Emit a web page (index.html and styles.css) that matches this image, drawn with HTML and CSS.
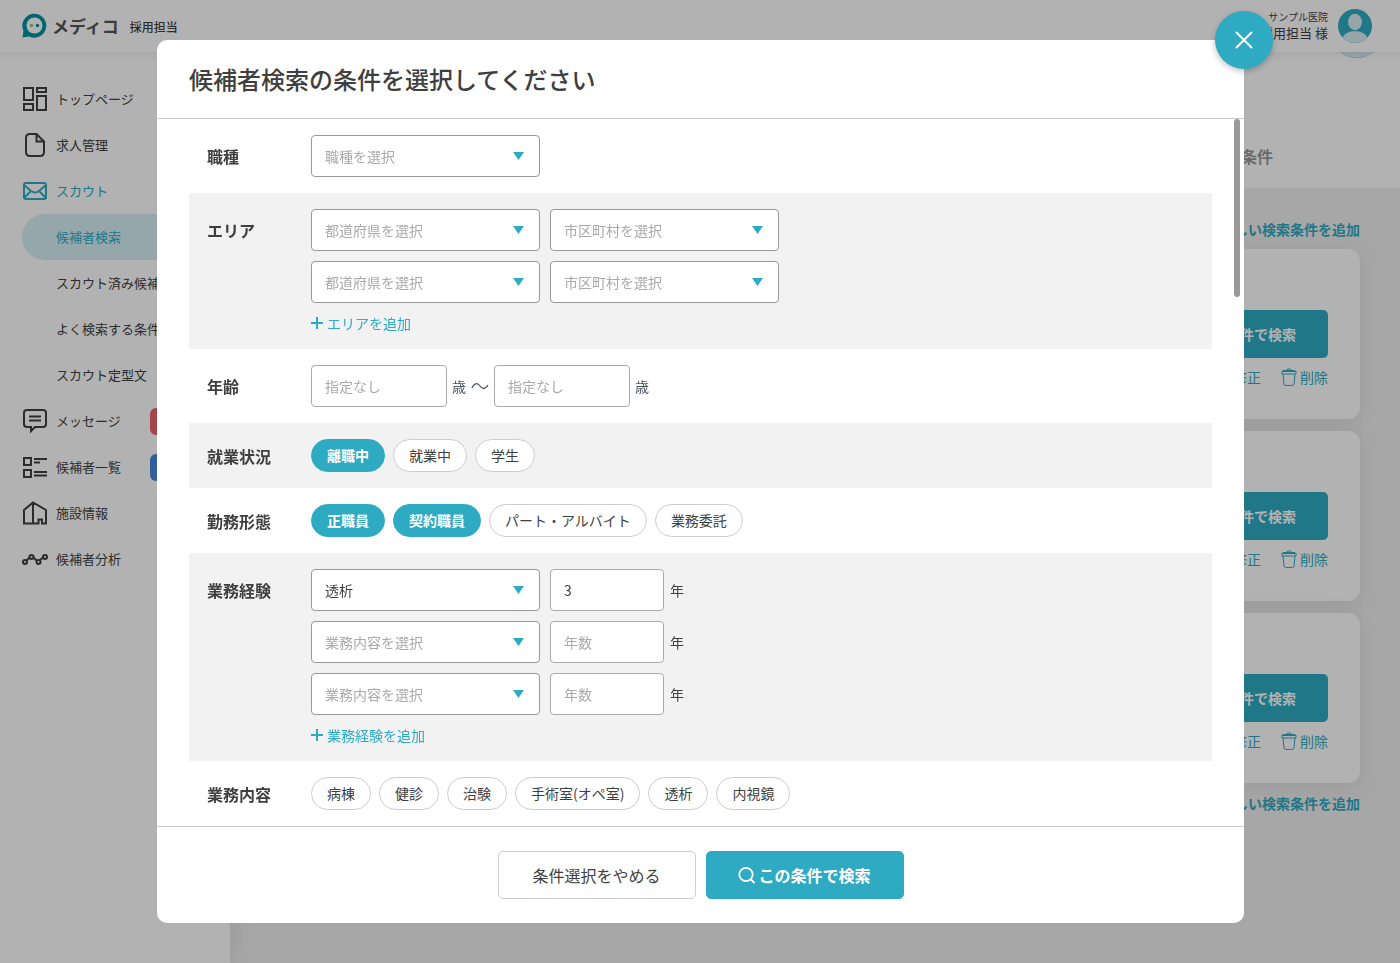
FILE: index.html
```html
<!DOCTYPE html>
<html lang="ja">
<head>
<meta charset="utf-8">
<meta name="viewport" content="width=device-width, initial-scale=1">
<title>メディコ 採用担当</title>
<link rel="stylesheet" href="styles.css">
</head>
<body>
<svg class="defs" aria-hidden="true">
  <symbol id="trash" viewBox="0 0 16 18"><path d="M1 3.500h14M2 6l1 10q.1 1.400 1.500 1.400h7q1.400 0 1.500-1.400l1-10M1 3.500V6h14V3.500L14 2.500H2zM5.500 2.500L6.500 1h3l1 1.500" fill="none" stroke="currentColor"/></symbol>
  <symbol id="plus" viewBox="0 0 12 12"><path d="M6 0v12M0 6h12" stroke="currentColor" stroke-width="2"/></symbol>
  <symbol id="avatar" viewBox="0 0 34 34"><circle cx="17" cy="17" r="17" fill="#2eabc3"/><ellipse cx="17" cy="13" rx="7" ry="8.200" fill="#d6edf1"/><path d="M4.500 28.500C7 24 11.500 22.300 17 22.300S27 24 29.500 28.500A17 17 0 0 1 4.500 28.500z" fill="#d6edf1"/></symbol>
</svg>

<div class="page">
  <header class="topbar">
    <a class="brand" href="#">
      <svg width="25" height="26" viewBox="0 0 25 26" aria-hidden="true"><path d="M.5 24.500L1.500 18A12 12 0 1 1 7 23.500z" fill="#0093a0"/><circle cx="12.500" cy="12.500" r="8" fill="#fff"/><circle cx="9.500" cy="12.500" r="1.700" fill="#9cc356"/><circle cx="15.500" cy="12.500" r="1.700" fill="#0093a0"/></svg>
      <span class="brand-name">メディコ</span>
      <span class="brand-role">採用担当</span>
    </a>
    <div class="user">
      <div class="user-text"><span class="user-org">サンプル医院</span><span class="user-name">採用担当 様</span></div>
      <svg width="34" height="34" aria-hidden="true"><use href="#avatar"/></svg>
    </div>
  </header>

  <nav class="sidebar">
    <a class="nav-item" href="#"><svg class="nav-icon" viewBox="0 0 26 26"><path d="M2 2h9v12H2zM15 2h9v4h-9zM2 18h9v6H2zM15 10h9v14h-9z"/></svg>トップページ</a>
    <a class="nav-item" href="#"><svg class="nav-icon" viewBox="0 0 26 26"><path d="M14.500 2H8Q4 2 4 6v14q0 4 4 4h10q4 0 4-4V9.500zM14.500 2v7.500H22"/></svg>求人管理</a>
    <a class="nav-item is-current" href="#"><svg class="nav-icon" viewBox="0 0 26 26"><rect x="2" y="5" width="22" height="16" rx="2"/><path d="M2 7l7 6q4 3 8 0l7-6M2 20l7-7M24 20l-7-7"/></svg>スカウト</a>
    <a class="nav-item sub is-current is-active" href="#">候補者検索</a>
    <a class="nav-item sub" href="#">スカウト済み候補者</a>
    <a class="nav-item sub" href="#">よく検索する条件</a>
    <a class="nav-item sub" href="#">スカウト定型文</a>
    <a class="nav-item" href="#"><svg class="nav-icon" viewBox="0 0 26 26"><path d="M5 2h16q3 0 3 3v11q0 3-3 3h-8l-4 4v-4H5q-3 0-3-3V5q0-3 3-3zM7 8.500h12M7 12.500h12"/></svg>メッセージ<span class="badge red"></span></a>
    <a class="nav-item" href="#"><svg class="nav-icon" viewBox="0 0 26 26"><path d="M2 4h7v7H2zM2 16h7v7H2zM12 5h13M12 8.500h6M12 18h13M12 21.500h13"/></svg>候補者一覧<span class="badge blue"></span></a>
    <a class="nav-item" href="#"><svg class="nav-icon" viewBox="0 0 26 26"><path d="M11 3v20.500H2V10l9-7.500L24 10v13.500h-4v-4h-3.500v4H11"/></svg>施設情報</a>
    <a class="nav-item" href="#"><svg class="nav-icon" viewBox="0 0 26 26"><path d="M4.500 14.500l3-3M11.500 11.500l3 3M18 14l3.500-3"/><circle cx="3" cy="16" r="2"/><circle cx="9.500" cy="11" r="2"/><circle cx="16.500" cy="16" r="2"/><circle cx="23" cy="11" r="2"/></svg>候補者分析</a>
  </nav>

  <main class="main">
    <div class="page-head">
      <svg class="page-avatar" width="50" height="50" aria-hidden="true"><use href="#avatar"/></svg>
      <a class="tab" href="#">よく検索する条件</a>
    </div>
    <div class="content">
      <a class="add-link" href="#">新しい検索条件を追加</a>
      <div class="cards">
        <section class="card">
          <button class="card-search" type="button">この条件で検索</button>
          <div class="card-links"><a href="#">修正</a><a href="#"><svg width="16" height="18" aria-hidden="true"><use href="#trash"/></svg>削除</a></div>
        </section>
        <section class="card">
          <button class="card-search" type="button">この条件で検索</button>
          <div class="card-links"><a href="#">修正</a><a href="#"><svg width="16" height="18" aria-hidden="true"><use href="#trash"/></svg>削除</a></div>
        </section>
        <section class="card">
          <button class="card-search" type="button">この条件で検索</button>
          <div class="card-links"><a href="#">修正</a><a href="#"><svg width="16" height="18" aria-hidden="true"><use href="#trash"/></svg>削除</a></div>
        </section>
      </div>
      <a class="add-link" href="#">新しい検索条件を追加</a>
    </div>
  </main>
</div>

<div class="overlay">
  <form class="modal" role="dialog" aria-modal="true" aria-labelledby="modal-title">
    <button class="close" type="button" aria-label="閉じる"><svg width="18" height="18" viewBox="0 0 18 18" aria-hidden="true"><path d="M1.500 1.500l15 15M16.500 1.500l-15 15" stroke="#fff" stroke-width="2" stroke-linecap="round"/></svg></button>
    <header class="modal-head"><h1 id="modal-title">候補者検索の条件を選択してください</h1></header>

    <div class="modal-body">
      <span class="scroll-thumb"></span>
      <div class="row">
        <label class="row-label" for="job">職種</label>
        <div class="fields">
          <div class="line"><span class="select"><select id="job" class="empty"><option>職種を選択</option></select></span></div>
        </div>
      </div>
      <div class="row">
        <label class="row-label" for="pref1">エリア</label>
        <div class="fields">
          <div class="line">
            <span class="select"><select id="pref1" class="empty"><option>都道府県を選択</option></select></span>
            <span class="select"><select class="empty" aria-label="市区町村 1"><option>市区町村を選択</option></select></span>
          </div>
          <div class="line">
            <span class="select"><select class="empty" aria-label="都道府県 2"><option>都道府県を選択</option></select></span>
            <span class="select"><select class="empty" aria-label="市区町村 2"><option>市区町村を選択</option></select></span>
          </div>
          <button class="add" type="button"><svg width="12" height="12" aria-hidden="true"><use href="#plus"/></svg>エリアを追加</button>
        </div>
      </div>
      <div class="row">
        <label class="row-label" for="age-min">年齢</label>
        <div class="fields">
          <div class="line age">
            <input id="age-min" type="text" placeholder="指定なし"><span>歳</span><svg width="18" height="8" viewBox="0 0 18 8" role="img" aria-label="から"><path d="M1 6C4 0 7 1 9 4s5 4 8-1" fill="none" stroke="currentColor" stroke-width="1.300"/></svg><input type="text" placeholder="指定なし" aria-label="年齢の上限"><span>歳</span>
          </div>
        </div>
      </div>
      <div class="row chips-row" role="group" aria-labelledby="g-status">
        <span class="row-label" id="g-status">就業状況</span>
        <div class="chips">
          <label class="chip"><input type="checkbox" checked>離職中</label>
          <label class="chip"><input type="checkbox">就業中</label>
          <label class="chip"><input type="checkbox">学生</label>
        </div>
      </div>
      <div class="row chips-row" role="group" aria-labelledby="g-style">
        <span class="row-label" id="g-style">勤務形態</span>
        <div class="chips">
          <label class="chip"><input type="checkbox" checked>正職員</label>
          <label class="chip"><input type="checkbox" checked>契約職員</label>
          <label class="chip"><input type="checkbox">パート・アルバイト</label>
          <label class="chip"><input type="checkbox">業務委託</label>
        </div>
      </div>
      <div class="row">
        <label class="row-label" for="exp1">業務経験</label>
        <div class="fields">
          <div class="line">
            <span class="select"><select id="exp1"><option>透析</option></select></span>
            <label class="years"><input type="text" value="3">年</label>
          </div>
          <div class="line">
            <span class="select"><select class="empty" aria-label="業務内容 2"><option>業務内容を選択</option></select></span>
            <label class="years"><input type="text" placeholder="年数">年</label>
          </div>
          <div class="line">
            <span class="select"><select class="empty" aria-label="業務内容 3"><option>業務内容を選択</option></select></span>
            <label class="years"><input type="text" placeholder="年数">年</label>
          </div>
          <button class="add" type="button"><svg width="12" height="12" aria-hidden="true"><use href="#plus"/></svg>業務経験を追加</button>
        </div>
      </div>
      <div class="row chips-row" role="group" aria-labelledby="g-work">
        <span class="row-label" id="g-work">業務内容</span>
        <div class="chips">
          <label class="chip"><input type="checkbox">病棟</label>
          <label class="chip"><input type="checkbox">健診</label>
          <label class="chip"><input type="checkbox">治験</label>
          <label class="chip"><input type="checkbox">手術室(オペ室)</label>
          <label class="chip"><input type="checkbox">透析</label>
          <label class="chip"><input type="checkbox">内視鏡</label>
        </div>
      </div>
    </div>

    <footer class="modal-foot">
      <button class="btn" type="button">条件選択をやめる</button>
      <button class="btn primary" type="submit"><svg width="18" height="18" viewBox="0 0 18 18" aria-hidden="true"><circle cx="8" cy="8.500" r="6.700" fill="none" stroke="#fff" stroke-width="1.800"/><path d="M13 13.500l3 3" stroke="#fff" stroke-width="1.800" stroke-linecap="round"/></svg>この条件で検索</button>
    </footer>
  </form>
</div>
</body>
</html>
```

FILE: styles.css
```css
:root {
  --teal: #2eabc3;
  --ink: #3f3f3f;
  --muted: #aaa;
}

* { box-sizing: border-box; }

body {
  margin: 0;
  color: var(--ink);
  font: 14px/20px "Noto Sans CJK JP", "Noto Sans", sans-serif;
}

a { color: inherit; text-decoration: none; }
button, input, select { font: inherit; color: inherit; }
button { padding: 0; border: 0; background: none; cursor: pointer; }
.defs { position: absolute; width: 0; height: 0; }

/* Page behind the dialog */
.page {
  display: grid;
  grid-template: 52px 1fr / 230px 1fr;
  height: 100vh;
  overflow: hidden;
}

.topbar {
  grid-column: 1 / -1;
  z-index: 3;
  display: flex;
  justify-content: space-between;
  align-items: center;
  padding: 0 28px 0 22px;
  background: #fff;
  box-shadow: 0 0 12px rgba(0, 0, 0, .1);
}

.brand { display: flex; align-items: center; }
.brand-name { margin: 0 11px 0 5px; color: #555; font-size: 17px; font-weight: 700; }
.brand-role { padding-top: 2px; font-size: 12px; font-weight: 500; }

.user { display: flex; align-items: center; gap: 10px; }
.user-text { display: flex; flex-direction: column; text-align: right; }
.user-org { font-size: 10px; line-height: 14px; }
.user-name { font-size: 13px; line-height: 18px; }

.sidebar {
  z-index: 2;
  padding: 24px 0 0 22px;
  background: #fff;
  box-shadow: 0 0 24px rgba(0, 0, 0, .1);
}

.nav-item {
  position: relative;
  display: flex;
  align-items: center;
  gap: 8px;
  height: 46px;
  font-size: 13px;
}
.nav-icon { width: 26px; height: 26px; fill: none; stroke: currentColor; stroke-width: 2; }
.nav-item.sub { padding-left: 34px; }
.is-current { color: var(--teal); }
.is-active { border-radius: 23px 0 0 23px; background: #d6f0f4; }
.badge { position: absolute; left: 128px; width: 60px; height: 27px; border-radius: 6px; }
.red { background: #f0646f; }
.blue { background: #4a88e0; }

.main { display: flex; flex-direction: column; background: #efefef; }
.page-head {
  position: relative;
  display: flex;
  justify-content: flex-end;
  align-items: flex-end;
  height: 136px;
  padding: 0 127px 20px 40px;
  background: #fff;
}
.page-avatar { position: absolute; top: -44px; right: 18px; }
.tab { color: #999; font-size: 16px; line-height: 24px; font-weight: 700; }

.content { display: flex; flex-direction: column; gap: 10px; padding: 31px 40px 0; }
.add-link { align-self: flex-end; color: var(--teal); font-weight: 700; line-height: 20px; }
.cards { display: flex; flex-direction: column; gap: 12px; }
.card {
  display: flex;
  flex-direction: column;
  align-items: flex-end;
  gap: 7px;
  height: 170px;
  padding: 61px 32px 0;
  border-radius: 12px;
  background: #fff;
  box-shadow: 0 4px 24px rgba(0, 0, 0, .08);
}
.card-search {
  width: 180px;
  height: 48px;
  padding-left: 18px;
  border-radius: 5px;
  background: var(--teal);
  color: #fff;
  font-weight: 700;
}
.card-links { display: flex; gap: 20px; color: var(--teal); line-height: 24px; }
.card-links a { display: flex; align-items: center; gap: 3px; }

/* Dialog */
.overlay {
  position: fixed;
  inset: 0;
  z-index: 10;
  display: flex;
  padding: 40px 156px 40px 157px;
  background: rgba(0, 0, 0, .3);
}
.modal {
  position: relative;
  display: flex;
  flex: 1;
  flex-direction: column;
  border-radius: 10px;
  background: #fff;
}
.close {
  position: absolute;
  top: -29px;
  right: -29px;
  z-index: 1;
  display: grid;
  place-items: center;
  width: 58px;
  height: 58px;
  border-radius: 50%;
  background: var(--teal);
  box-shadow: 0 2px 6px rgba(0, 0, 0, .25);
}
.modal-head { padding: 21px 32px; border-bottom: 1px solid #ccc; }
.modal-head h1 { margin: 0; font-size: 24px; line-height: 36px; font-weight: 500; }

.modal-body {
  position: relative;
  flex: 1;
  min-height: 0;
  padding: 0 32px;
  overflow-y: auto;
  scrollbar-width: none;
}
.scroll-thumb {
  position: absolute;
  top: 0;
  right: 4px;
  width: 6px;
  height: 178px;
  border-radius: 3px;
  background: #999;
}

.row { display: flex; padding: 16px 18px; }
.row:nth-of-type(even) { background: #f2f2f2; }
.row-label { flex: 0 0 104px; font-size: 16px; line-height: 42px; height: 42px; font-weight: 700; }
.chips-row .row-label { height: 33px; line-height: 34px; }

.fields { display: flex; flex-direction: column; align-items: flex-start; gap: 10px; }
.line { display: flex; align-items: center; gap: 10px; }

.select { position: relative; display: block; width: 229px; }
.select::after {
  content: "";
  position: absolute;
  top: 17px;
  right: 16px;
  width: 11px;
  height: 8px;
  background: var(--teal);
  clip-path: polygon(0 0, 100% 0, 50% 100%);
  pointer-events: none;
}
select, input[type="text"] {
  display: block;
  width: 100%;
  height: 42px;
  padding: 0 13px;
  border: 1px solid #999;
  border-radius: 4px;
  background: #fff;
  appearance: none;
}
input[type="text"] { border-color: #aaa; }
select.empty, ::placeholder { color: var(--muted); opacity: 1; }

.age { gap: 5px; color: #4b5563; }
.age input[type="text"] { width: 136px; }
.age span { width: 14px; }
.years { display: flex; align-items: center; gap: 6px; }
.years input[type="text"] { width: 114px; }

.add { display: flex; align-items: center; gap: 4px; height: 20px; color: var(--teal); }

.chips { display: flex; flex-wrap: wrap; gap: 8px; }
.chip {
  position: relative;
  padding: 0 15px;
  border: 1px solid #ccc;
  border-radius: 17px;
  background: #fff;
  line-height: 31px;
  cursor: pointer;
}
.chip input { position: absolute; inset: 0; margin: 0; opacity: 0; }
.chip:has(:checked) { border-color: var(--teal); background: var(--teal); color: #fff; font-weight: 700; }

.modal-foot {
  display: flex;
  justify-content: center;
  gap: 10px;
  padding: 24px 32px;
  border-top: 1px solid #ccc;
}
.btn {
  display: flex;
  justify-content: center;
  align-items: center;
  gap: 2px;
  width: 198px;
  height: 48px;
  border: 1px solid #ccc;
  border-radius: 5px;
  background: #fff;
  font-size: 16px;
}
.btn.primary { border-color: var(--teal); background: var(--teal); color: #fff; font-weight: 700; }
```
